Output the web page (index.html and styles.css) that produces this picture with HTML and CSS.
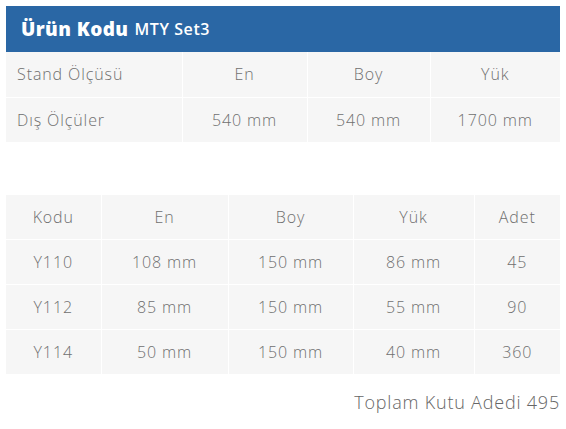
FILE: index.html
```html
<!DOCTYPE html>
<html lang="tr">
<head>
<meta charset="utf-8">
<link rel="stylesheet" href="styles.css">
</head>
<body>
<div class="page">
  <div class="product">
    <div class="product-head"><span class="code-label">Ürün Kodu</span> <span class="code-value">MTY Set3</span></div>
    <table class="grid stand">
      <tr><td class="left">Stand Ölçüsü</td><td>En</td><td>Boy</td><td>Yük</td></tr>
      <tr><td class="left">Dış Ölçüler</td><td>540 mm</td><td>540 mm</td><td>1700 mm</td></tr>
    </table>
  </div>
  <table class="grid boxes">
    <tr><td>Kodu</td><td>En</td><td>Boy</td><td>Yük</td><td>Adet</td></tr>
    <tr><td>Y110</td><td>108 mm</td><td>150 mm</td><td>86 mm</td><td>45</td></tr>
    <tr><td>Y112</td><td>85 mm</td><td>150 mm</td><td>55 mm</td><td>90</td></tr>
    <tr><td>Y114</td><td>50 mm</td><td>150 mm</td><td>40 mm</td><td>360</td></tr>
  </table>
  <div class="total">Toplam Kutu Adedi 495</div>
</div>
</body>
</html>
```
FILE: styles.css
```css
html, body { margin: 0; padding: 0; background: #fff; }
body { font-family: "Open Sans", "DejaVu Sans", sans-serif; color: #6f6f6f; }
.page { padding: 6px 6px 0 6px; width: 554px; }
.product-head {
  background: #2a67a5;
  color: #fff;
  height: 46px;
  display: flex;
  align-items: center;
  gap: 6px;
  padding-left: 15px;
  box-sizing: border-box;
}
.code-label { font-weight: 800; font-size: 19px; letter-spacing: 0.4px; }
.code-value { font-weight: 600; font-size: 16px; letter-spacing: 0.6px; }
.grid { width: 100%; border-collapse: collapse; table-layout: fixed; }
.grid td {
  background: #f6f6f6;
  border: 1px solid #fff;
  height: 45px;
  padding: 0;
  text-align: center;
  font-size: 16px;
  font-weight: 300;
  letter-spacing: 0.9px;
  color: #6f6f6f;
  box-sizing: border-box;
}
.grid tr:first-child td { border-top: 0; }
.grid td:first-child { border-left: 0; }
.grid td:last-child { border-right: 0; }
.grid tr:last-child td { border-bottom: 0; }
.grid td.left { text-align: left; padding-left: 11px; }
.stand td:nth-child(1) { width: 176px; }
.stand td:nth-child(2) { width: 125px; }
.stand td:nth-child(3) { width: 123px; }
.boxes { margin-top: 53px; }
.boxes tr:first-child td { height: 44px; }
.boxes td:nth-child(1) { width: 95px; }
.boxes td:nth-child(2) { width: 127px; }
.boxes td:nth-child(3) { width: 125px; }
.boxes td:nth-child(4) { width: 121px; }
.total {
  text-align: right;
  font-size: 18px;
  font-weight: 300;
  letter-spacing: 0.8px;
  color: #666;
  margin-top: 16px;
}
```
